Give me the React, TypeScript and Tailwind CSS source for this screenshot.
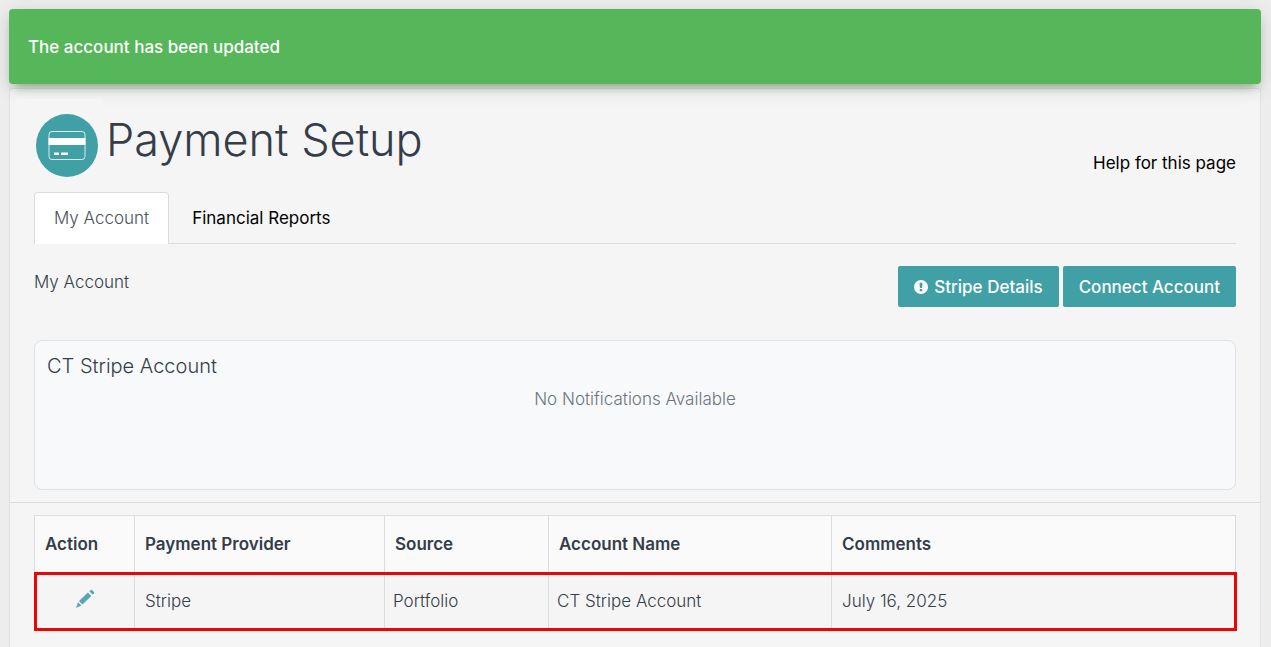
import type { ReactNode } from "react";

const accounts = [
  {
    provider: "Stripe",
    source: "Portfolio",
    name: "CT Stripe Account",
    comments: "July 16, 2025",
  },
];

function CardIcon() {
  return (
    <svg viewBox="0 0 62 63" className="h-[63px] w-[62px]" aria-hidden="true">
      <ellipse cx="31" cy="31.5" rx="31" ry="31.5" fill="#419fa6" />
      <rect x="13" y="17.5" width="36" height="28" rx="3" fill="none" stroke="#fff" strokeOpacity="0.8" />
      <rect x="12.5" y="24" width="37" height="7" fill="#fff" />
      <rect x="18" y="38.5" width="5" height="2.5" fill="#fff" />
      <rect x="25" y="38.5" width="7" height="2.5" fill="#fff" />
    </svg>
  );
}

function AlertIcon() {
  return (
    <svg viewBox="0 0 14 14" className="h-[14px] w-[14px]" aria-hidden="true">
      <circle cx="7" cy="7" r="7" fill="#fff" />
      <path d="M5.5 2.8h3l-.4 5.2H5.9z" fill="#419fa6" />
      <rect x="5.7" y="8.9" width="2.6" height="2.3" rx="0.4" fill="#419fa6" />
    </svg>
  );
}

function PencilIcon() {
  return (
    <svg viewBox="0 0 20 20" className="h-5 w-5" aria-hidden="true">
      <g fill="#5fa3b3">
        <path d="M12.9 3.4 16.4 6.9 7.5 15.6 4 12.1z" />
        <path d="M14.4 2.4 15.8 1q.6-.5 1.2 0l2 2q.5.6 0 1.2l-1.4 1.4z" />
        <path d="M3 13.2 6.4 16.6 1 19z" />
      </g>
    </svg>
  );
}

function HeadCell({ className = "", children }: { className?: string; children?: ReactNode }) {
  return (
    <th scope="col" className={`border border-[#dadcde] bg-[#fafafa] px-2.5 text-left font-semibold ${className}`}>
      {children}
    </th>
  );
}

export default function App() {
  return (
    <div className="flex min-h-screen flex-col bg-[#ededed] px-[9px] pt-[9px] font-['Inter',sans-serif] text-[17px] leading-6 font-light text-[#343d49]">
      <div
        role="status"
        className="relative mr-px rounded bg-[#56b65a] px-[19px] pt-[26px] pb-[25px] font-medium text-white shadow-[0_4px_20px_rgba(0,0,0,0.12),0_7px_10px_-5px_rgba(50,110,50,0.5)]"
      >
        The account has been updated
      </div>

      <main className="mt-1 mr-px flex-1 rounded-t border border-b-0 border-[#e0e0e0] bg-[#f5f5f5]">
        <header className="flex items-end justify-between pt-2.5 pr-6 pl-1.5">
          <div className="flex items-start">
            <div className="relative flex bg-[#f5f5f5] pt-[15px] pr-[5px] pb-[15px] pl-5">
              <CardIcon />
            </div>
            <h1 className="pt-[13px] pl-[3px] text-[45px] leading-[56px]">Payment Setup</h1>
          </div>
          <a href="#help" className="pb-[17px] font-normal text-black">
            Help for this page
          </a>
        </header>

        <nav className="mx-6 flex border-b border-[#dadcde]">
          <a
            href="#account"
            aria-current="page"
            className="-mb-px rounded-t border border-b-0 border-[#dadcde] bg-white px-[19px] pt-[13px] pb-3.5 text-[#495057]"
          >
            My Account
          </a>
          <a href="#reports" className="px-[23px] pt-3.5 font-normal text-black">
            Financial Reports
          </a>
        </nav>

        <section className="mx-6 flex items-start justify-between pt-[22px]">
          <h2 className="pt-1">My Account</h2>
          <div className="flex gap-1">
            <button
              type="button"
              className="flex h-[41px] items-center gap-1.5 rounded-xs bg-[#419fa6] px-4 font-medium text-white"
            >
              <AlertIcon />
              Stripe Details
            </button>
            <button type="button" className="h-[41px] rounded-xs bg-[#419fa6] px-4 font-medium text-white">
              Connect Account
            </button>
          </div>
        </section>

        <section className="mx-6 mt-[33px] h-[150px] rounded-lg border border-[#dee2e6] bg-[#f8f9fb] px-3 pt-[13px]">
          <h3 className="text-xl leading-6">CT Stripe Account</h3>
          <p className="pt-[9px] text-center text-[#6c757d]">No Notifications Available</p>
        </section>

        <section className="mt-3 border-t border-[#dadcde] px-6 pt-3">
          <table className="w-full table-fixed border-collapse">
            <thead>
              <tr className="h-[57px]">
                <HeadCell className="w-[100px]">Action</HeadCell>
                <HeadCell className="w-[250px]">Payment Provider</HeadCell>
                <HeadCell className="w-[164px]">Source</HeadCell>
                <HeadCell className="w-[283px]">Account Name</HeadCell>
                <HeadCell>Comments</HeadCell>
              </tr>
            </thead>
            <tbody>
              {accounts.map((account) => (
                <tr key={account.name} className="h-[57px] outline-3 -outline-offset-2 outline-[#ea0606]">
                  <td className="border border-[#dadcde] pb-1">
                    <button type="button" aria-label="Edit account" className="mx-auto block">
                      <PencilIcon />
                    </button>
                  </td>
                  <td className="border border-[#dadcde] px-2.5">{account.provider}</td>
                  <td className="border border-[#dadcde] px-2">{account.source}</td>
                  <td className="border border-[#dadcde] px-2">{account.name}</td>
                  <td className="border border-[#dadcde] px-2.5">{account.comments}</td>
                </tr>
              ))}
            </tbody>
          </table>
        </section>
      </main>
    </div>
  );
}
